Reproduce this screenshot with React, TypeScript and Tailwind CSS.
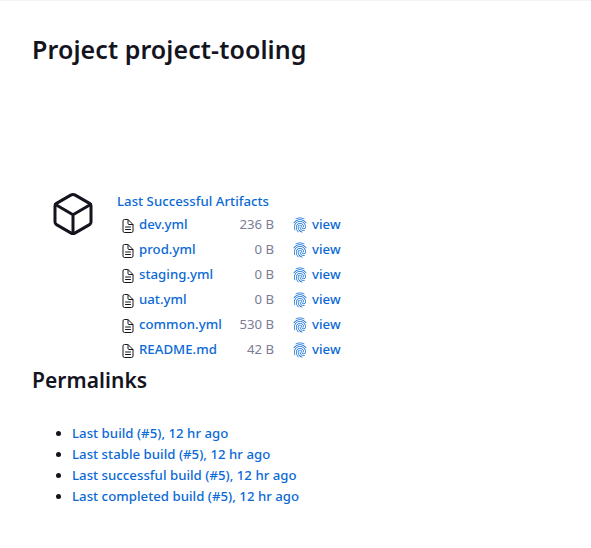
import React from 'react';
import { IoCubeOutline, IoDocumentTextOutline, IoFingerPrintOutline } from 'react-icons/io5';

const artifacts = [
  { name: 'dev.yml', size: '236 B' },
  { name: 'prod.yml', size: '0 B' },
  { name: 'staging.yml', size: '0 B' },
  { name: 'uat.yml', size: '0 B' },
  { name: 'common.yml', size: '530 B' },
  { name: 'README.md', size: '42 B' },
];

const permalinks = [
  'Last build (#5), 12 hr ago',
  'Last stable build (#5), 12 hr ago',
  'Last successful build (#5), 12 hr ago',
  'Last completed build (#5), 12 hr ago',
];

export default function App() {
  return (
    <main className="h-[548px] w-[591px] overflow-hidden border-t border-[#f3f3f5] bg-white px-8 font-['Noto_Sans',sans-serif] text-[13.2px] font-medium tracking-[0.03px] text-[#14141f]">
      <h1 className="mt-[30px] h-9 text-[25px] leading-9 font-semibold tracking-[0.08px] whitespace-nowrap">
        Project project-tooling
      </h1>
      <section className="mt-[123px] flex h-[172px]">
        <IoCubeOutline className="ml-[17px] size-12 shrink-0" />
        <div className="ml-5 pt-[1px]">
          <a className="block h-[21px] leading-[21px] text-[#0b6ad6]">Last Successful Artifacts</a>
          <ul>
            {artifacts.map((a) => (
              <li key={a.name} className="flex h-[25px] items-center">
                <IoDocumentTextOutline className="mt-[3px] ml-[3px] size-4 shrink-0" />
                <a className="ml-[3px] w-[90px] pb-0.5 leading-[18px] text-[#0b6ad6]">{a.name}</a>
                <span className="w-[45px] pb-0.5 text-right leading-[18px] font-normal tracking-[-0.04px] text-[#7c7c96]">
                  {a.size}
                </span>
                <IoFingerPrintOutline className="ml-[18px] size-4 shrink-0 text-[#0b6ad6]" />
                <a className="ml-1 pb-0.5 leading-[18px] text-[#0b6ad6]">view</a>
              </li>
            ))}
          </ul>
        </div>
      </section>
      <h2 className="mt-[2px] h-8 text-[21px] leading-8 font-semibold tracking-[0.05px]">Permalinks</h2>
      <ul className="mt-[27px] list-disc pl-10">
        {permalinks.map((p) => (
          <li key={p} className="h-[21px] leading-[21px]">
            <a className="text-[#0b6ad6]">{p}</a>
          </li>
        ))}
      </ul>
    </main>
  );
}
